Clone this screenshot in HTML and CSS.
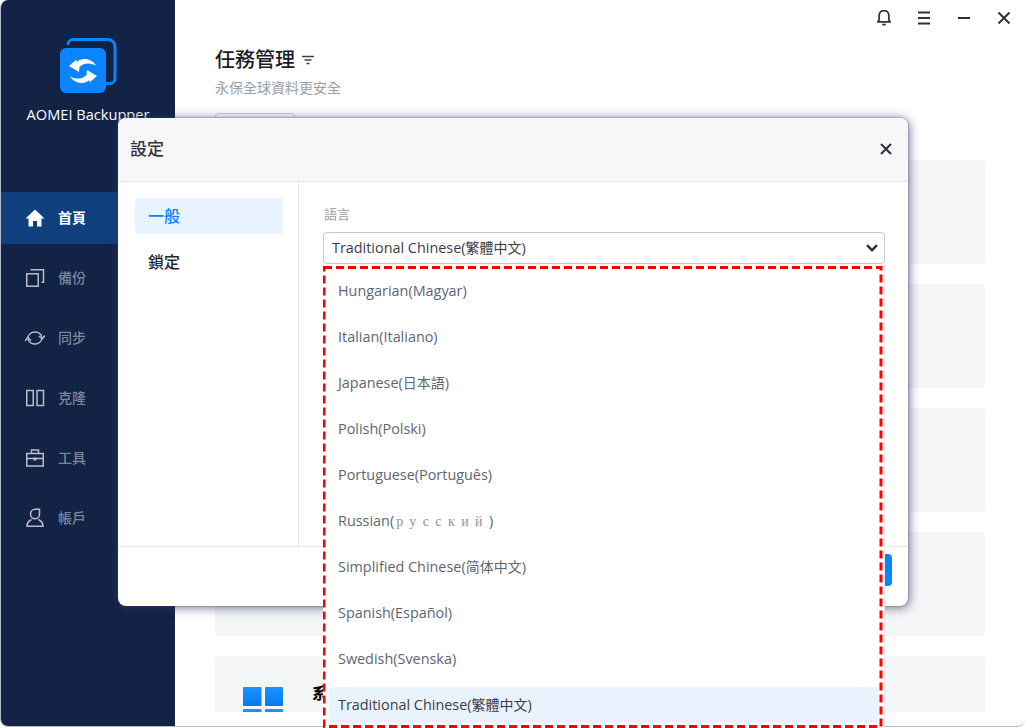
FILE: index.html
```html
<!DOCTYPE html>
<html lang="zh-Hant">
<head>
<meta charset="utf-8">
<title>AOMEI Backupper</title>
<link rel="stylesheet" href="styles.css">
</head>
<body>
<div class="app">
  <aside class="sidebar">
    <div class="brand">
      <svg class="logo" width="58" height="56" viewBox="-1 0 58 56">
        <path d="M8 7V6.500a5 5 0 0 1 5-5h35a7 7 0 0 1 7 7v32a5 5 0 0 1-5 5H46" fill="none" stroke="#0a84ff" stroke-width="3"/>
        <rect x="0" y="10" width="46" height="45" rx="6" fill="#0a84ff"/>
        <path d="M9 28 16.500 21.500V24C22 19.500 31 20 36 27.500 30 24.500 24 24.500 19.500 29L19 34Z" fill="#fff"/>
        <path d="M9 28 16.500 21.500V24C22 19.500 31 20 36 27.500 30 24.500 24 24.500 19.500 29L19 34Z" fill="#fff" transform="rotate(180 23 33)"/>
      </svg>
      <div class="brand-name">AOMEI Backupper</div>
    </div>
    <nav class="nav">
      <a class="nav-item active">
        <svg width="20" height="20" viewBox="0 0 20 20"><path d="M10 1.500 0.500 10.500h3v8h4.500v-5.500h4v5.500h4.500v-8h3z" fill="#fff"/></svg>
        <span>首頁</span>
      </a>
      <a class="nav-item">
        <svg width="20" height="20" viewBox="0 0 20 20" fill="none" stroke="#b9bdc9" stroke-width="1.500"><rect x="1.750" y="5.750" width="11.500" height="12.500"/><path d="M5.500 1.750h13v12.500h-2"/></svg>
        <span>備份</span>
      </a>
      <a class="nav-item">
        <svg width="20" height="20" viewBox="0 0 20 20" fill="none" stroke="#b9bdc9" stroke-width="1.500"><path d="M2.800 10.500A7.300 7.300 0 0 1 17 9"/><path d="M14 8 17.200 11 20 7.500"/><path d="M17.200 9.500A7.300 7.300 0 0 1 3 11"/><path d="M6 12.500 2.800 9.500 0 13"/></svg>
        <span>同步</span>
      </a>
      <a class="nav-item">
        <svg width="20" height="20" viewBox="0 0 20 20" fill="none" stroke="#b9bdc9" stroke-width="1.500"><rect x="1.750" y="2.500" width="6.500" height="15"/><rect x="12" y="2.500" width="6.500" height="15"/></svg>
        <span>克隆</span>
      </a>
      <a class="nav-item">
        <svg width="20" height="20" viewBox="0 0 20 20" fill="none" stroke="#b9bdc9" stroke-width="1.500"><rect x="1.750" y="5.500" width="16.500" height="12.500"/><path d="M6.500 5.500v-3.500h7v3.500M1.750 10.500h16.500"/><rect x="8.500" y="9.500" width="3" height="3" fill="#b9bdc9" stroke="none"/></svg>
        <span>工具</span>
      </a>
      <a class="nav-item">
        <svg width="20" height="20" viewBox="0 0 20 20" fill="none" stroke="#b9bdc9" stroke-width="1.500"><path d="M14.500 1.250v5a4.500 4.500 0 1 1-9 0c0-2.800 2-5 4.500-5z"/><path d="M6.500 11.500C3.500 13 2 15 2 18.250H18C18 15 16.500 13 13.500 11.500"/></svg>
        <span>帳戶</span>
      </a>
    </nav>
  </aside>

  <main class="main">
    <div class="winbar">
      <svg width="14" height="16" viewBox="0 0 16 18" fill="none" stroke="#2e3146" stroke-width="2"><path d="M1 13.500h14l-1.500-2.500v-5a5.500 5.500 0 0 0-11 0v5z"/><path d="M6 16.500h4"/></svg>
      <svg width="14" height="14" viewBox="0 0 14 14" fill="none" stroke="#2e3146" stroke-width="2"><path d="M1 1.500h12M1 7h12M1 12.500h12"/></svg>
      <svg width="14" height="14" viewBox="0 0 14 14" fill="none" stroke="#2e3146" stroke-width="2"><path d="M1 7h12"/></svg>
      <svg width="14" height="14" viewBox="0 0 14 14" fill="none" stroke="#2e3146" stroke-width="2"><path d="M1.500 1.500l11 11M12.500 1.500l-11 11"/></svg>
    </div>
    <div class="heading">
      <h1>任務管理</h1>
      <svg width="12" height="10" viewBox="0 0 12 10" fill="none" stroke="#3a3d4d" stroke-width="1.300"><path d="M0 1.500h12M2.500 5h7M4.500 8.500h3"/></svg>
    </div>
    <p class="subtitle">永保全球資料更安全</p>
    <div class="tab"></div>
    <div class="cards">
      <div class="card"></div>
      <div class="card"></div>
      <div class="card"></div>
      <div class="card"></div>
      <div class="card last">
        <svg width="40" height="41" viewBox="0 0 40 41"><defs><linearGradient id="win" x1="0" y1="0" x2="0" y2="1"><stop offset="0" stop-color="#1b95ff"/><stop offset="1" stop-color="#0678f0"/></linearGradient></defs><g fill="url(#win)"><rect x="0" y="0" width="18.500" height="19" rx="1"/><rect x="22" y="0" width="18" height="19" rx="1"/><rect x="0" y="22" width="18.500" height="19" rx="1"/><rect x="22" y="22" width="18" height="19" rx="1"/></g></svg>
        <strong>系統備份</strong>
      </div>
    </div>
  </main>
</div>

<section class="modal">
  <header class="modal-head">
    <h2>設定</h2>
    <svg class="modal-close" width="12" height="12" viewBox="0 0 12 12" fill="none" stroke="#2e3146" stroke-width="2"><path d="M1 1l10 10M11 1L1 11"/></svg>
  </header>
  <div class="modal-body">
    <div class="tabs">
      <div class="tab-item selected">一般</div>
      <div class="tab-item">鎖定</div>
    </div>
    <div class="panel">
      <label class="field-label">語言</label>
      <div class="select">
        <span class="select-text">Traditional Chinese(<span class="cjk">繁體中文</span>)</span>
        <svg width="12" height="8" viewBox="0 0 12 8" fill="none" stroke="#2e3146" stroke-width="2.400"><path d="M1 1.200l5 5 5-5"/></svg>
        <div class="dropdown">
          <div class="option">Hungarian(Magyar)</div>
          <div class="option">Italian(Italiano)</div>
          <div class="option">Japanese(<span class="cjk">日本語</span>)</div>
          <div class="option">Polish(Polski)</div>
          <div class="option">Portuguese(Português)</div>
          <div class="option">Russian(<span class="ru">русский</span>)</div>
          <div class="option">Simplified Chinese(<span class="cjk">简体中文</span>)</div>
          <div class="option">Spanish(Español)</div>
          <div class="option">Swedish(Svenska)</div>
          <div class="option current">Traditional Chinese(<span class="cjk">繁體中文</span>)</div>
          <svg class="dash" width="560" height="462" viewBox="0 0 560 462"><rect x="1" y="1.500" width="557" height="459" fill="none" stroke="#ff0000" stroke-width="3" stroke-dasharray="8 4"/></svg>
        </div>
      </div>
    </div>
  </div>
  <footer class="modal-foot">
    <button class="primary" aria-label="確定"></button>
  </footer>
</section>
</body>
</html>
```

FILE: styles.css
```css
* { box-sizing: border-box; }
html, body { margin: 0; padding: 0; height: 728px; overflow: hidden; background: #fff; }
body {
  position: relative;
  font-family: "Open Sans", "Noto Sans CJK TC", sans-serif;
  color: #1f2230;
}
.cjk { font-size: 14px; }
.app {
  display: flex;
  width: 1025px;
  height: 727px;
  border-radius: 8px;
  overflow: hidden;
  background: #fff;
  border-left: 1px solid #b4bacb;
  border-bottom: 1px solid #b4bacb;
}
.sidebar {
  flex: none;
  width: 174px;
  background: #132346;
  display: flex;
  flex-direction: column;
}
.brand {
  height: 192px;
  padding-top: 38px;
  display: flex;
  flex-direction: column;
  align-items: center;
}
.brand-name {
  margin-top: 10px;
  font-size: 14.600px;
  line-height: 20px;
  color: #fff;
  white-space: nowrap;
}
.nav { display: flex; flex-direction: column; gap: 8px; }
.nav-item {
  height: 52px;
  display: flex;
  align-items: center;
  gap: 13px;
  padding-left: 24px;
  font-size: 14px;
  font-weight: 500;
  color: #7d8599;
}
.nav-item span { padding-bottom: 2px; }
.nav-item.active { background: #0f3f7c; color: #fff; font-weight: 700; }
.main {
  flex: 1;
  min-width: 0;
  display: flex;
  flex-direction: column;
  padding: 0 40px 14px 40px;
}
.winbar {
  height: 36px;
  margin-right: -26px;
  display: flex;
  justify-content: flex-end;
  align-items: center;
  gap: 26px;
}
.winbar svg { display: block; }
.heading { display: flex; align-items: center; gap: 7px; margin-top: 10px; height: 28px; }
h1 { margin: 0; font-size: 20px; font-weight: 500; line-height: 28px; color: #1a1c28; }
.subtitle { margin: 4px 0 0; font-size: 14px; line-height: 20px; color: #9a9ea8; }
.tab { width: 80px; height: 36px; margin-top: 15px; border: 1px solid #cfd2da; border-radius: 4px; flex: none; }
.cards {
  margin-top: 11px;
  flex: 1;
  min-height: 0;
  overflow: hidden;
  display: flex;
  flex-direction: column;
  gap: 20px;
}
.card { flex: none; height: 104px; background: #f4f5f7; border-radius: 4px; }
.card.last { display: flex; align-items: flex-start; gap: 29px; padding: 31px 0 0 28px; }
.card.last strong { margin-top: -2px; font-size: 16px; line-height: 16px; color: #000; white-space: nowrap; }
.modal {
  position: absolute;
  left: 118px;
  top: 118px;
  width: 790px;
  height: 488px;
  display: flex;
  flex-direction: column;
  background: #fff;
  border-radius: 8px;
  box-shadow: 0 0 2px rgba(60, 70, 110, .7), 0 0 11px rgba(50, 60, 100, .5), 2px 3px 9px rgba(50, 60, 100, .3);
}
.modal-head {
  flex: none;
  height: 64px;
  display: flex;
  justify-content: space-between;
  align-items: center;
  padding: 0 16px 0 12px;
  background: #f7f7f8;
  border-radius: 8px 8px 0 0;
  border-bottom: 1px solid #e6e7ea;
}
.modal-close { margin-bottom: 2px; }
h2 { margin: 0; padding-bottom: 4px; font-size: 17px; font-weight: 500; color: #33353f; }
.modal-body { flex: 1; min-height: 0; display: flex; }
.tabs {
  flex: none;
  width: 181px;
  padding: 16px 15px 0 17px;
  border-right: 1px solid #e6e7ea;
  display: flex;
  flex-direction: column;
  gap: 10px;
}
.tab-item {
  height: 36px;
  padding: 0 0 2px 13px;
  display: flex;
  align-items: center;
  font-size: 16px;
  font-weight: 500;
  color: #23252f;
  border-radius: 4px;
}
.tab-item.selected { background: #e9f3fd; color: #0a84ff; }
.panel { flex: 1; min-width: 0; padding: 23px 23px 0 24px; }
.field-label { display: block; font-size: 13px; line-height: 18px; color: #9a9ea8; margin-left: 1px; }
.select {
  position: relative;
  margin-top: 9px;
  height: 32px;
  display: flex;
  align-items: center;
  justify-content: space-between;
  padding: 0 6px 0 8px;
  border: 1px solid #c5c7d0;
  border-radius: 4px;
  font-size: 14.400px;
  color: #3a3d4a;
}
.select-text { padding-bottom: 2px; }
.dropdown {
  position: absolute;
  left: -1px;
  top: 33px;
  width: 562px;
  height: 462px;
  padding: 7px 5px 0 6px;
  background: #fff;
  border-right: 1px solid #e8e9ed;
  display: flex;
  flex-direction: column;
  gap: 10px;
}
.dash { position: absolute; left: 0; top: 0; }
.option {
  flex: none;
  height: 36px;
  line-height: 36px;
  padding-left: 9px;
  font-size: 14.400px;
  color: #5f6572;
  border-radius: 4px;
  white-space: pre;
}
.option.current { background: #e9f3fd; color: #3a3d4a; }
.ru { font-family: "Liberation Serif", serif; font-size: 14px; letter-spacing: 6.400px; margin-left: 2px; color: #8a93a3; }
.modal-foot {
  flex: none;
  height: 60px;
  display: flex;
  justify-content: flex-end;
  padding: 7px 16px 0 0;
  border-top: 1px solid #e6e7ea;
}
.primary {
  width: 100px;
  height: 32px;
  border: 0;
  border-radius: 4px;
  background: #0a84ff;
}
```
